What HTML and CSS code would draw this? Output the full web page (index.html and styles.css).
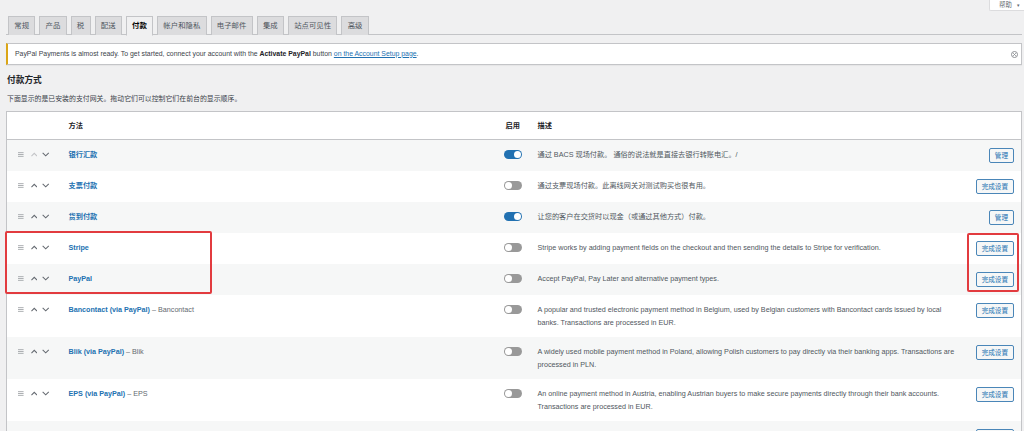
FILE: index.html
```html
<!DOCTYPE html>
<html lang="zh-CN">
<head>
<meta charset="utf-8">
<title>付款方式</title>
<link rel="stylesheet" href="styles.css">
</head>
<body>
<div class="screen-meta">
  <button class="help-btn">帮助 <span class="caret">▾</span></button>
</div>
<div class="wrap">
  <nav class="tabs">
    <a class="tab">常规</a>
    <a class="tab">产品</a>
    <a class="tab">税</a>
    <a class="tab">配送</a>
    <a class="tab active">付款</a>
    <a class="tab">帐户和隐私</a>
    <a class="tab">电子邮件</a>
    <a class="tab">集成</a>
    <a class="tab">站点可见性</a>
    <a class="tab">高级</a>
  </nav>

  <div class="notice">
    <p>PayPal Payments is almost ready. To get started, connect your account with the <strong>Activate PayPal</strong> button <a class="link">on the Account Setup page</a>.</p>
    <svg class="dismiss" width="7" height="7" viewBox="0 0 14 14"><circle cx="7" cy="7" r="6" fill="none" stroke="#8c8f94" stroke-width="2"/><path d="M4.5 4.5l5 5M9.5 4.5l-5 5" stroke="#8c8f94" stroke-width="2"/></svg>
  </div>

  <h2 class="title">付款方式</h2>
  <p class="intro">下面显示的是已安装的支付网关。拖动它们可以控制它们在前台的显示顺序。</p>

  <table class="gateways">
    <colgroup>
      <col class="c-sort"><col class="c-name"><col class="c-status"><col class="c-desc"><col>
    </colgroup>
    <thead>
      <tr><th></th><th>方法</th><th>启用</th><th>描述</th><th></th></tr>
    </thead>
    <tbody>
      <tr>
        <td class="sort"><span class="sorter"><svg class="grip" width="6" height="5" viewBox="0 0 6 5"><path d="M0 .5h6M0 2.5h6M0 4.5h6" stroke="currentColor"/></svg><svg class="chev off" width="7" height="5" viewBox="0 0 7 5"><path d="M.5 4.2L3.5 1.2 6.5 4.2" fill="none" stroke="currentColor" stroke-width="1.1"/></svg><svg class="chev" width="8" height="5" viewBox="0 0 8 5"><path d="M.7 .8L4 4 7.3 .8" fill="none" stroke="currentColor" stroke-width="1.1"/></svg></span></td>
        <td class="name"><a>银行汇款</a></td>
        <td class="status"><span class="toggle on"></span></td>
        <td class="desc">通过 BACS 现场付款。 通俗的说法就是直接去银行转账电汇。/</td>
        <td class="action"><button class="btn">管理</button></td>
      </tr>
      <tr>
        <td class="sort"><span class="sorter"><svg class="grip" width="6" height="5" viewBox="0 0 6 5"><path d="M0 .5h6M0 2.5h6M0 4.5h6" stroke="currentColor"/></svg><svg class="chev" width="7" height="5" viewBox="0 0 7 5"><path d="M.5 4.2L3.5 1.2 6.5 4.2" fill="none" stroke="currentColor" stroke-width="1.1"/></svg><svg class="chev" width="8" height="5" viewBox="0 0 8 5"><path d="M.7 .8L4 4 7.3 .8" fill="none" stroke="currentColor" stroke-width="1.1"/></svg></span></td>
        <td class="name"><a>支票付款</a></td>
        <td class="status"><span class="toggle"></span></td>
        <td class="desc">通过支票现场付款。此离线网关对测试购买也很有用。</td>
        <td class="action"><button class="btn">完成设置</button></td>
      </tr>
      <tr>
        <td class="sort"><span class="sorter"><svg class="grip" width="6" height="5" viewBox="0 0 6 5"><path d="M0 .5h6M0 2.5h6M0 4.5h6" stroke="currentColor"/></svg><svg class="chev" width="7" height="5" viewBox="0 0 7 5"><path d="M.5 4.2L3.5 1.2 6.5 4.2" fill="none" stroke="currentColor" stroke-width="1.1"/></svg><svg class="chev" width="8" height="5" viewBox="0 0 8 5"><path d="M.7 .8L4 4 7.3 .8" fill="none" stroke="currentColor" stroke-width="1.1"/></svg></span></td>
        <td class="name"><a>货到付款</a></td>
        <td class="status"><span class="toggle on"></span></td>
        <td class="desc">让您的客户在交货时以现金（或通过其他方式）付款。</td>
        <td class="action"><button class="btn">管理</button></td>
      </tr>
      <tr>
        <td class="sort"><span class="sorter"><svg class="grip" width="6" height="5" viewBox="0 0 6 5"><path d="M0 .5h6M0 2.5h6M0 4.5h6" stroke="currentColor"/></svg><svg class="chev" width="7" height="5" viewBox="0 0 7 5"><path d="M.5 4.2L3.5 1.2 6.5 4.2" fill="none" stroke="currentColor" stroke-width="1.1"/></svg><svg class="chev" width="8" height="5" viewBox="0 0 8 5"><path d="M.7 .8L4 4 7.3 .8" fill="none" stroke="currentColor" stroke-width="1.1"/></svg></span></td>
        <td class="name"><a>Stripe</a></td>
        <td class="status"><span class="toggle"></span></td>
        <td class="desc">Stripe works by adding payment fields on the checkout and then sending the details to Stripe for verification.</td>
        <td class="action"><button class="btn">完成设置</button></td>
      </tr>
      <tr>
        <td class="sort"><span class="sorter"><svg class="grip" width="6" height="5" viewBox="0 0 6 5"><path d="M0 .5h6M0 2.5h6M0 4.5h6" stroke="currentColor"/></svg><svg class="chev" width="7" height="5" viewBox="0 0 7 5"><path d="M.5 4.2L3.5 1.2 6.5 4.2" fill="none" stroke="currentColor" stroke-width="1.1"/></svg><svg class="chev" width="8" height="5" viewBox="0 0 8 5"><path d="M.7 .8L4 4 7.3 .8" fill="none" stroke="currentColor" stroke-width="1.1"/></svg></span></td>
        <td class="name"><a>PayPal</a></td>
        <td class="status"><span class="toggle"></span></td>
        <td class="desc">Accept PayPal, Pay Later and alternative payment types.</td>
        <td class="action"><button class="btn">完成设置</button></td>
      </tr>
      <tr>
        <td class="sort"><span class="sorter"><svg class="grip" width="6" height="5" viewBox="0 0 6 5"><path d="M0 .5h6M0 2.5h6M0 4.5h6" stroke="currentColor"/></svg><svg class="chev" width="7" height="5" viewBox="0 0 7 5"><path d="M.5 4.2L3.5 1.2 6.5 4.2" fill="none" stroke="currentColor" stroke-width="1.1"/></svg><svg class="chev" width="8" height="5" viewBox="0 0 8 5"><path d="M.7 .8L4 4 7.3 .8" fill="none" stroke="currentColor" stroke-width="1.1"/></svg></span></td>
        <td class="name"><a>Bancontact (via PayPal)</a> <span class="sub">– Bancontact</span></td>
        <td class="status"><span class="toggle"></span></td>
        <td class="desc">A popular and trusted electronic payment method in Belgium, used by Belgian customers with Bancontact cards issued by local banks. Transactions are processed in EUR.</td>
        <td class="action"><button class="btn">完成设置</button></td>
      </tr>
      <tr>
        <td class="sort"><span class="sorter"><svg class="grip" width="6" height="5" viewBox="0 0 6 5"><path d="M0 .5h6M0 2.5h6M0 4.5h6" stroke="currentColor"/></svg><svg class="chev" width="7" height="5" viewBox="0 0 7 5"><path d="M.5 4.2L3.5 1.2 6.5 4.2" fill="none" stroke="currentColor" stroke-width="1.1"/></svg><svg class="chev" width="8" height="5" viewBox="0 0 8 5"><path d="M.7 .8L4 4 7.3 .8" fill="none" stroke="currentColor" stroke-width="1.1"/></svg></span></td>
        <td class="name"><a>Blik (via PayPal)</a> <span class="sub">– Blik</span></td>
        <td class="status"><span class="toggle"></span></td>
        <td class="desc">A widely used mobile payment method in Poland, allowing Polish customers to pay directly via their banking apps. Transactions are processed in PLN.</td>
        <td class="action"><button class="btn">完成设置</button></td>
      </tr>
      <tr>
        <td class="sort"><span class="sorter"><svg class="grip" width="6" height="5" viewBox="0 0 6 5"><path d="M0 .5h6M0 2.5h6M0 4.5h6" stroke="currentColor"/></svg><svg class="chev" width="7" height="5" viewBox="0 0 7 5"><path d="M.5 4.2L3.5 1.2 6.5 4.2" fill="none" stroke="currentColor" stroke-width="1.1"/></svg><svg class="chev" width="8" height="5" viewBox="0 0 8 5"><path d="M.7 .8L4 4 7.3 .8" fill="none" stroke="currentColor" stroke-width="1.1"/></svg></span></td>
        <td class="name"><a>EPS (via PayPal)</a> <span class="sub">– EPS</span></td>
        <td class="status"><span class="toggle"></span></td>
        <td class="desc">An online payment method in Austria, enabling Austrian buyers to make secure payments directly through their bank accounts. Transactions are processed in EUR.</td>
        <td class="action"><button class="btn">完成设置</button></td>
      </tr>
      <tr>
        <td class="sort"><span class="sorter"><svg class="grip" width="6" height="5" viewBox="0 0 6 5"><path d="M0 .5h6M0 2.5h6M0 4.5h6" stroke="currentColor"/></svg><svg class="chev" width="7" height="5" viewBox="0 0 7 5"><path d="M.5 4.2L3.5 1.2 6.5 4.2" fill="none" stroke="currentColor" stroke-width="1.1"/></svg><svg class="chev" width="8" height="5" viewBox="0 0 8 5"><path d="M.7 .8L4 4 7.3 .8" fill="none" stroke="currentColor" stroke-width="1.1"/></svg></span></td>
        <td class="name"><a>iDEAL (via PayPal)</a> <span class="sub">– iDEAL</span></td>
        <td class="status"><span class="toggle"></span></td>
        <td class="desc">The most common payment method in the Netherlands, allowing Dutch buyers to pay directly through their preferred bank account. Transactions are processed in EUR.</td>
        <td class="action"><button class="btn">完成设置</button></td>
      </tr>
    </tbody>
  </table>
</div>
<div class="mark mark-left"></div>
<div class="mark mark-right"></div>
</body>
</html>
```
FILE: styles.css
```css
* { box-sizing: border-box; }

html, body {
  margin: 0;
  padding: 0;
  background: #f0f0f1;
  color: #3c434a;
  font-family: "Liberation Sans", "Noto Sans CJK SC", sans-serif;
  font-size: 7.2px;
  line-height: 12.5px;
  overflow: hidden;
}

.screen-meta {
  display: flex;
  justify-content: flex-end;
  height: 11px;
}

.help-btn {
  height: 11px;
  width: 35px;
  margin: 0;
  padding: 0 4px 0 9px;
  border: 1px solid #dcdcde;
  border-top: 0;
  border-right: 0;
  background: #fff;
  color: #646970;
  font: inherit;
  font-size: 6.4px;
  line-height: 10px;
  display: flex;
  justify-content: space-between;
  border-radius: 0 0 0 2px;
}

.caret { font-size: 5px; }

.wrap {
  padding: 0 2px 0 6px;
}

.tabs {
  display: flex;
  gap: 4px;
  margin-top: 5px;
  padding-left: 2px;
  border-bottom: 1px solid #c3c4c7;
  height: 19px;
}

.tab {
  display: block;
  height: 19px;
  padding: 0 5.25px;
  border: 1px solid #c3c4c7;
  border-bottom: 0;
  background: #dcdcde;
  color: #50575e;
  font-size: 7.4px;
  line-height: 18px;
}

.tab.active {
  background: #f0f0f1;
  color: #000;
  font-weight: 700;
  height: 20px;
  border-bottom: 1px solid #f0f0f1;
}

.notice {
  margin-top: 8px;
  height: 22px;
  display: flex;
  align-items: center;
  justify-content: space-between;
  background: #fff;
  border: 1px solid #c3c4c7;
  border-left: 2px solid #dba617;
  padding: 0 3px 0 7px;
  font-size: 6.9px;
  box-shadow: 0 1px 1px rgba(0,0,0,.04);
}

.notice p { margin: 0; color: #3c434a; }
.notice strong { font-weight: 700; color: #1d2327; }
.link { color: #2271b1; text-decoration: underline; }

.title {
  margin: 9px 0 0 1px;
  font-size: 8.7px;
  line-height: 12px;
  font-weight: 700;
  color: #1d2327;
}

.intro {
  margin: 7px 0 0 1px;
  font-size: 6.9px;
  line-height: 12px;
  color: #3c434a;
}

.gateways {
  margin-top: 6px;
  width: 100%;
  table-layout: fixed;
  border-collapse: collapse;
  border: 1px solid #c3c4c7;
  background: #fff;
}

.c-sort { width: 55px; }
.c-name { width: 437px; }
.c-status { width: 32px; }
.c-desc { width: 430px; }

.gateways th {
  text-align: left;
  font-weight: 700;
  color: #1d2327;
  padding: 8px 7px 7px;
  line-height: 12px;
  border-bottom: 1px solid #c3c4c7;
}

.gateways td {
  padding: 8px 7px;
  vertical-align: top;
  line-height: 13px;
}

.gateways tbody tr:nth-child(odd) { background: #f6f7f7; }

.gateways td.sort { padding-left: 11px; }

.sorter {
  display: flex;
  align-items: center;
  height: 13px;
}

.grip { color: #a7aaad; margin-right: 7px; }
.chev { color: #646970; margin-right: 5px; }
.chev.off { color: #c3c4c7; }

.name a {
  color: #2271b1;
  font-weight: 700;
}

.sub { color: #646970; }

.gateways td.status { padding-left: 5px; }

.toggle {
  display: block;
  margin-top: 2px;
  width: 18px;
  height: 9px;
  border-radius: 5px;
  background: #999;
  position: relative;
}

.toggle::after {
  content: "";
  position: absolute;
  top: 1px;
  left: 1px;
  width: 7px;
  height: 7px;
  border-radius: 50%;
  background: #fff;
}

.toggle.on { background: #2271b1; }
.toggle.on::after { left: 10px; }

.gateways td.desc {
  color: #50575e;
  padding-right: 3px;
}

.gateways td.action {
  text-align: right;
  padding-top: 8px;
  padding-bottom: 8px;
  line-height: 0;
}

.btn {
  height: 15px;
  margin: 0;
  padding: 0 5px;
  border: 1px solid #4a86b8;
  border-radius: 2px;
  background: #f6f7f7;
  color: #2271b1;
  font-family: inherit;
  font-size: 6.6px;
  line-height: 13px;
  vertical-align: top;
}

.mark {
  position: absolute;
  border-width: 2px;
  border-style: solid;
  border-color: #e23b3f;
  border-radius: 2px;
  pointer-events: none;
}

.mark-left { left: 5px; top: 231px; width: 207px; height: 63px; }
.mark-right { left: 967px; top: 233px; width: 52px; height: 59px; }
```
